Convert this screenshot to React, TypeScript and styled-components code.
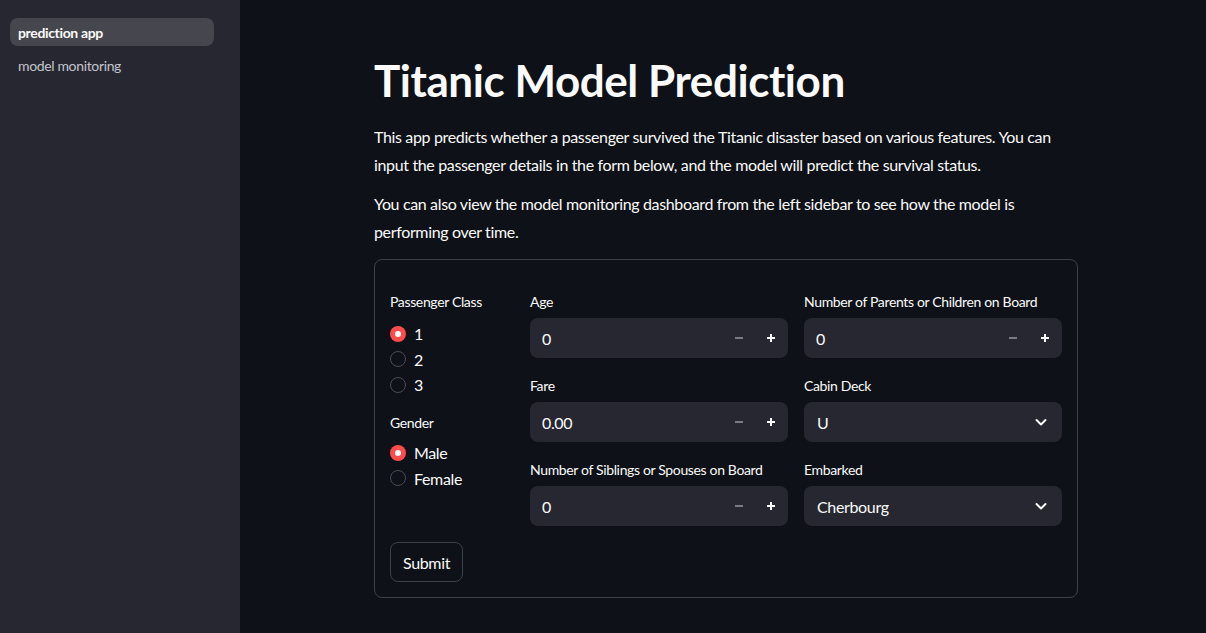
import React from "react";
import styled, { createGlobalStyle } from "styled-components";

const FONT = `"Lato", "Noto Sans", sans-serif`;

const Global = createGlobalStyle`
  html, body { margin: 0; padding: 0; background: #0e1117; }
  body { font-family: ${FONT}; color: #fafafa; letter-spacing: -0.022em; }
  * { box-sizing: border-box; }
`;

const Shell = styled.div`
  display: flex;
  width: 1206px;
  height: 633px;
  overflow: hidden;
`;

const Sidebar = styled.aside`
  width: 240px;
  flex: 0 0 240px;
  background: #262730;
  padding: 18px 26px 0 10px;
  display: flex;
  flex-direction: column;
  gap: 5px;
`;

const NavItem = styled.div<{ $active?: boolean }>`
  height: 28px;
  display: flex;
  align-items: center;
  padding: 0 8px;
  border-radius: 8px;
  font-size: 14px;
  font-weight: ${(p) => (p.$active ? 700 : 400)};
  color: ${(p) => (p.$active ? "#fafafa" : "#c3c5cc")};
  background: ${(p) => (p.$active ? "#46474e" : "transparent")};
`;

const Main = styled.main`
  flex: 1;
  background: #0e1117;
  padding: 54px 0 0 134px;
`;

const Content = styled.div`
  width: 704px;
`;

const Title = styled.h1`
  margin: 0 0 17px;
  font-size: 44px;
  line-height: 52px;
  font-weight: 700;
  letter-spacing: -0.01em;
  color: #fafafa;
`;

const Para = styled.p`
  margin: 0 0 12px;
  font-size: 16px;
  line-height: 27.5px;
  color: #fafafa;
`;

const Form = styled.form`
  margin-top: 14px;
  border: 1px solid #3d4044;
  border-radius: 8px;
  padding: 30px 15px 15px;
  display: flex;
  flex-direction: column;
  gap: 16px;
`;

const Columns = styled.div`
  display: grid;
  grid-template-columns: 124px 258px 258px;
  column-gap: 16px;
`;

const Col = styled.div<{ $gap?: number }>`
  display: flex;
  flex-direction: column;
  gap: ${(p) => p.$gap ?? 16}px;
`;

const Field = styled.div`
  display: flex;
  flex-direction: column;
  gap: 4px;
`;

const Label = styled.label`
  height: 24px;
  padding-bottom: 2px;
  display: flex;
  align-items: center;
  font-size: 14px;
  color: #fafafa;
`;

const RadioGroup = styled.div<{ $pad: number }>`
  display: flex;
  flex-direction: column;
  padding-top: ${(p) => p.$pad}px;
`;

const RadioRow = styled.div`
  height: 25.6px;
  display: flex;
  align-items: center;
  gap: 8px;
  font-size: 16px;
`;

const RadioDot = styled.span<{ $checked?: boolean }>`
  width: 16px;
  height: 16px;
  border-radius: 50%;
  flex: 0 0 16px;
  display: flex;
  align-items: center;
  justify-content: center;
  background: ${(p) => (p.$checked ? "#ff4b4b" : "#0e1117")};
  border: ${(p) => (p.$checked ? "none" : "1px solid #4a4c53")};
  &::after {
    content: "";
    display: ${(p) => (p.$checked ? "block" : "none")};
    width: 6px;
    height: 6px;
    border-radius: 50%;
    background: #fff;
  }
`;

const InputBox = styled.div`
  height: 40px;
  background: #262730;
  border-radius: 8px;
  display: flex;
  align-items: center;
  padding-left: 12px;
  font-size: 16px;
  color: #fafafa;
`;

const Value = styled.span`
  flex: 1;
`;

const StepBtn = styled.span<{ $disabled?: boolean }>`
  width: 32px;
  height: 40px;
  display: flex;
  align-items: center;
  justify-content: center;
  color: ${(p) => (p.$disabled ? "#7a7b80" : "#fafafa")};
`;

const Steps = styled.div`
  display: flex;
  margin-right: 1px;
`;

const Chevron = styled.span`
  width: 40px;
  display: flex;
  align-items: center;
  justify-content: center;
  margin-right: 1px;
`;

const SelectBox = styled(InputBox)`
  padding-left: 13px;
`;

const SubmitButton = styled.button`
  align-self: flex-start;
  height: 40px;
  padding: 0 12px;
  background: #0e1117;
  border: 1px solid #3d4044;
  border-radius: 8px;
  color: #fafafa;
  font-family: ${FONT};
  font-size: 16px;
  letter-spacing: -0.022em;
`;

const Minus = () => (
  <svg width="10" height="10" viewBox="0 0 10 10">
    <path d="M1 5h8" stroke="currentColor" strokeWidth="2" />
  </svg>
);
const Plus = () => (
  <svg width="10" height="10" viewBox="0 0 10 10">
    <path d="M1 5h8M5 1v8" stroke="currentColor" strokeWidth="2" />
  </svg>
);
const Down = () => (
  <svg width="14" height="14" viewBox="0 0 14 14">
    <path d="M2.5 5l4.5 4.5L11.5 5" fill="none" stroke="#fafafa" strokeWidth="2" strokeLinecap="round" strokeLinejoin="round" />
  </svg>
);

const NumberInput = ({ label, value }: { label: string; value: string }) => (
  <Field>
    <Label>{label}</Label>
    <InputBox>
      <Value>{value}</Value>
      <Steps>
        <StepBtn $disabled>
          <Minus />
        </StepBtn>
        <StepBtn>
          <Plus />
        </StepBtn>
      </Steps>
    </InputBox>
  </Field>
);

const Select = ({ label, value }: { label: string; value: string }) => (
  <Field>
    <Label>{label}</Label>
    <SelectBox>
      <Value>{value}</Value>
      <Chevron>
        <Down />
      </Chevron>
    </SelectBox>
  </Field>
);

const Radio = ({
  label,
  options,
  checked,
  pad,
}: {
  label: string;
  options: string[];
  checked: number;
  pad: number;
}) => (
  <Field>
    <Label>{label}</Label>
    <RadioGroup $pad={pad}>
      {options.map((o, i) => (
        <RadioRow key={o}>
          <RadioDot $checked={i === checked} />
          {o}
        </RadioRow>
      ))}
    </RadioGroup>
  </Field>
);

export default function App() {
  return (
    <>
      <Global />
      <Shell>
        <Sidebar>
          <NavItem $active>prediction app</NavItem>
          <NavItem>model monitoring</NavItem>
        </Sidebar>
        <Main>
          <Content>
            <Title>Titanic Model Prediction</Title>
            <Para>
              This app predicts whether a passenger survived the Titanic disaster based on various features. You can
              input the passenger details in the form below, and the model will predict the survival status.
            </Para>
            <Para>
              You can also view the model monitoring dashboard from the left sidebar to see how the model is
              performing over time.
            </Para>
            <Form onSubmit={(e) => e.preventDefault()}>
              <Columns>
                <Col $gap={14}>
                  <Radio label="Passenger Class" options={["1", "2", "3"]} checked={0} pad={3} />
                  <Radio label="Gender" options={["Male", "Female"]} checked={0} pad={0} />
                </Col>
                <Col>
                  <NumberInput label="Age" value="0" />
                  <NumberInput label="Fare" value="0.00" />
                  <NumberInput label="Number of Siblings or Spouses on Board" value="0" />
                </Col>
                <Col>
                  <NumberInput label="Number of Parents or Children on Board" value="0" />
                  <Select label="Cabin Deck" value="U" />
                  <Select label="Embarked" value="Cherbourg" />
                </Col>
              </Columns>
              <SubmitButton type="submit">Submit</SubmitButton>
            </Form>
          </Content>
        </Main>
      </Shell>
    </>
  );
}
